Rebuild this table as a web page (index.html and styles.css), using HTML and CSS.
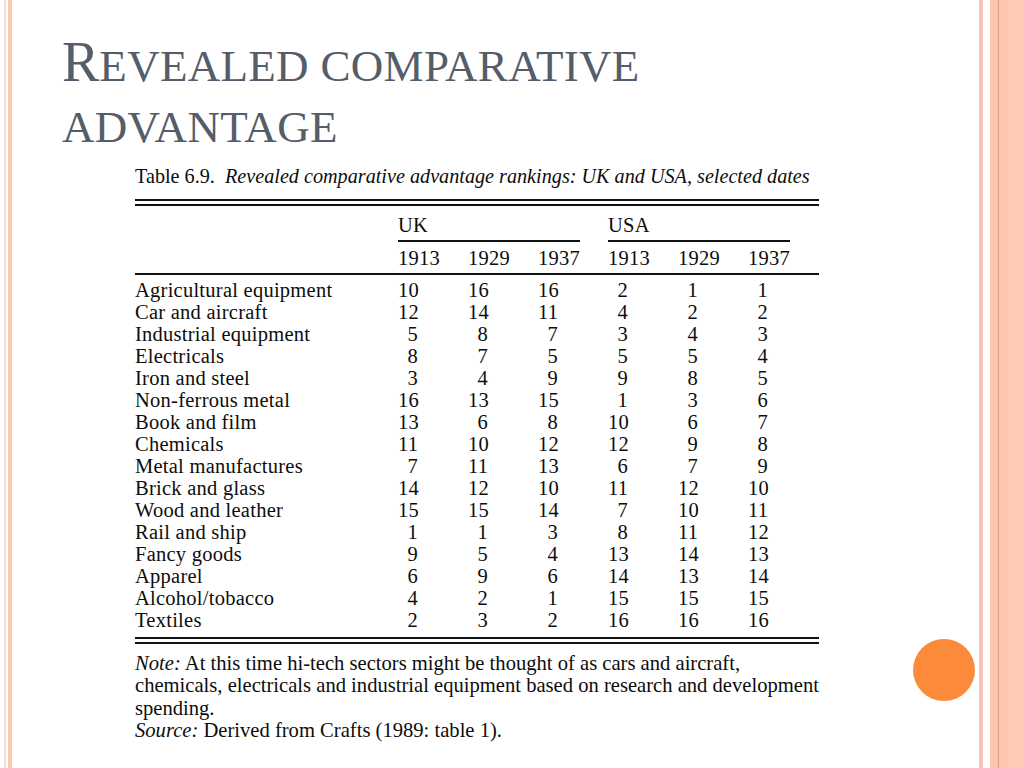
FILE: index.html
```html
<!DOCTYPE html>
<html>
<head>
<meta charset="utf-8">
<link rel="stylesheet" href="styles.css">
</head>
<body>
<div class="slide">
  <h1 class="title"><span class="first">R</span><span class="rest">evealed comparative<br>advantage</span></h1>
  <div class="tbl">
    <p class="caption">Table 6.9.&nbsp; <i>Revealed comparative advantage rankings: UK and USA, selected dates</i></p>
    <div class="dbl"></div>
    <div class="grid group-row">
      <div></div>
      <div class="group">UK</div>
      <div class="group">USA</div>
    </div>
    <div class="grid year-row">
      <div></div>
      <div class="yr">1913</div><div class="yr">1929</div><div class="yr">1937</div>
      <div class="yr">1913</div><div class="yr">1929</div><div class="yr">1937</div>
    </div>
    <div class="body">
      <div class="grid row"><div class="lab">Agricultural equipment</div><div class="n">10</div><div class="n">16</div><div class="n">16</div><div class="n">2</div><div class="n">1</div><div class="n">1</div></div>
      <div class="grid row"><div class="lab">Car and aircraft</div><div class="n">12</div><div class="n">14</div><div class="n">11</div><div class="n">4</div><div class="n">2</div><div class="n">2</div></div>
      <div class="grid row"><div class="lab">Industrial equipment</div><div class="n">5</div><div class="n">8</div><div class="n">7</div><div class="n">3</div><div class="n">4</div><div class="n">3</div></div>
      <div class="grid row"><div class="lab">Electricals</div><div class="n">8</div><div class="n">7</div><div class="n">5</div><div class="n">5</div><div class="n">5</div><div class="n">4</div></div>
      <div class="grid row"><div class="lab">Iron and steel</div><div class="n">3</div><div class="n">4</div><div class="n">9</div><div class="n">9</div><div class="n">8</div><div class="n">5</div></div>
      <div class="grid row"><div class="lab">Non-ferrous metal</div><div class="n">16</div><div class="n">13</div><div class="n">15</div><div class="n">1</div><div class="n">3</div><div class="n">6</div></div>
      <div class="grid row"><div class="lab">Book and film</div><div class="n">13</div><div class="n">6</div><div class="n">8</div><div class="n">10</div><div class="n">6</div><div class="n">7</div></div>
      <div class="grid row"><div class="lab">Chemicals</div><div class="n">11</div><div class="n">10</div><div class="n">12</div><div class="n">12</div><div class="n">9</div><div class="n">8</div></div>
      <div class="grid row"><div class="lab">Metal manufactures</div><div class="n">7</div><div class="n">11</div><div class="n">13</div><div class="n">6</div><div class="n">7</div><div class="n">9</div></div>
      <div class="grid row"><div class="lab">Brick and glass</div><div class="n">14</div><div class="n">12</div><div class="n">10</div><div class="n">11</div><div class="n">12</div><div class="n">10</div></div>
      <div class="grid row"><div class="lab">Wood and leather</div><div class="n">15</div><div class="n">15</div><div class="n">14</div><div class="n">7</div><div class="n">10</div><div class="n">11</div></div>
      <div class="grid row"><div class="lab">Rail and ship</div><div class="n">1</div><div class="n">1</div><div class="n">3</div><div class="n">8</div><div class="n">11</div><div class="n">12</div></div>
      <div class="grid row"><div class="lab">Fancy goods</div><div class="n">9</div><div class="n">5</div><div class="n">4</div><div class="n">13</div><div class="n">14</div><div class="n">13</div></div>
      <div class="grid row"><div class="lab">Apparel</div><div class="n">6</div><div class="n">9</div><div class="n">6</div><div class="n">14</div><div class="n">13</div><div class="n">14</div></div>
      <div class="grid row"><div class="lab">Alcohol/tobacco</div><div class="n">4</div><div class="n">2</div><div class="n">1</div><div class="n">15</div><div class="n">15</div><div class="n">15</div></div>
      <div class="grid row"><div class="lab">Textiles</div><div class="n">2</div><div class="n">3</div><div class="n">2</div><div class="n">16</div><div class="n">16</div><div class="n">16</div></div>
    </div>
    <div class="dbl"></div>
    <p class="note"><i>Note:</i> At this time hi-tech sectors might be thought of as cars and aircraft,<br>chemicals, electricals and industrial equipment based on research and development<br>spending.<br><i>Source:</i> Derived from Crafts (1989: table 1).</p>
  </div>
  <div class="dot"></div>
</div>
</body>
</html>
```
FILE: styles.css
```css
* { box-sizing: border-box; }
html, body { margin: 0; padding: 0; }
body {
  width: 1024px;
  height: 768px;
  overflow: hidden;
  background: #fff;
}
.slide {
  position: relative;
  width: 1024px;
  height: 768px;
  padding: 36px 0 0 62px;
  background:
    linear-gradient(to right,
      #fff 0, #fff 4px,
      #f3e1d6 4px, #f3e1d6 6px,
      #fff 6px, #fff 8px,
      #fcc5b5 8px, #fcc5b5 12px,
      transparent 12px, transparent 979px,
      #f8c3b3 979px, #f8c3b3 983px,
      #fff 983px, #fff 990px,
      #fbc5b0 990px, #fbc5b0 998px,
      #e49c7e 998px, #e49c7e 999px,
      #fbc5b0 999px, #fbc5b0 1008px,
      #fdcab6 1008px, #fdcab6 1024px);
  font-family: "Liberation Serif", "Times New Roman", serif;
}
.title {
  margin: 0;
  height: 126px;
  font-family: "Liberation Serif", serif;
  font-weight: normal;
  color: #555d69;
  line-height: 61px;
  font-size: 45px;
}
.title .first {
  font-size: 56px;
  line-height: 0;
}
.title .rest {
  text-transform: uppercase;
  letter-spacing: 0.3px;
}
.tbl {
  margin: 3px 0 0 73px;
  width: 684px;
  color: #0d0d0d;
  font-size: 20.5px;
  letter-spacing: 0.25px;
}
.caption {
  margin: 0;
  line-height: 22px;
  white-space: nowrap;
  font-size: 20.2px;
  letter-spacing: 0;
}
.dbl {
  height: 7px;
  border-top: 2px solid #111;
  border-bottom: 2px solid #111;
}
.tbl > .dbl:first-of-type { margin-top: 12px; }
.grid {
  display: grid;
  grid-template-columns: 263px repeat(6, 70px);
  line-height: 22px;
}
.group-row { padding-top: 8px; }
.group {
  grid-column: span 3;
  margin-right: 28px;
  border-bottom: 2px solid #111;
  padding-bottom: 4px;
}
.year-row {
  padding-top: 5px;
  padding-bottom: 4px;
  border-bottom: 2px solid #111;
}
.body { padding: 4px 0 6px; }
.row .n {
  text-align: right;
  padding-right: 50px;
}
.lab { white-space: nowrap; }
.note {
  margin: 8px 0 0;
  line-height: 22.3px;
  white-space: nowrap;
  font-size: 20.6px;
  letter-spacing: 0;
}
.dot {
  position: absolute;
  left: 913px;
  top: 639px;
  width: 62px;
  height: 62px;
  border-radius: 50%;
  background: #fb8a3b;
}
```
